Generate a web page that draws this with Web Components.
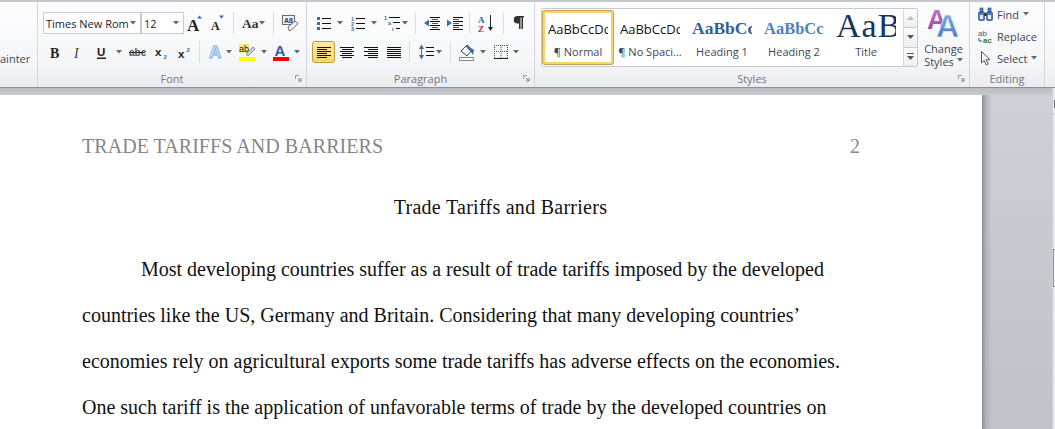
<!DOCTYPE html>
<html>
<head>
<meta charset="utf-8">
<title>Trade Tariffs and Barriers</title>
<style>
  html, body { margin: 0; height: 100%; overflow: hidden; background: #fff; }
</style>
</head>
<body>
<word-app>
  <word-ribbon>
    <ribbon-group w="38" label="">
      <div style="flex:none;height:32px"></div>
      <div style="flex:none;font:11px 'Open Sans',sans-serif;color:#3d4a5c;line-height:16px">ainter</div>
    </ribbon-group>

    <ribbon-group w="269" label="Font" launcher>
      <ribbon-row>
        <font-combo m="5" w="98" arrow>Times New Rom</font-combo>
        <font-combo w="43" arrow>12</font-combo>
        <tool-btn i="grow" m="4"></tool-btn>
        <tool-btn i="shrink" m="9"></tool-btn>
        <tool-btn i="sep" m="9"></tool-btn>
        <tool-btn i="case" m="8"></tool-btn>
        <tool-btn i="caret" m="2"></tool-btn>
        <tool-btn i="sep" m="8"></tool-btn>
        <tool-btn i="clear" m="8"></tool-btn>
      </ribbon-row>
      <ribbon-row>
        <tool-btn i="bold" m="12"></tool-btn>
        <tool-btn i="italic" m="13"></tool-btn>
        <tool-btn i="under" m="15"></tool-btn>
        <tool-btn i="caret" m="10"></tool-btn>
        <tool-btn i="strike" m="7"></tool-btn>
        <tool-btn i="sub" m="10"></tool-btn>
        <tool-btn i="sup" m="11"></tool-btn>
        <tool-btn i="sep" m="9"></tool-btn>
        <tool-btn i="effect" m="8"></tool-btn>
        <tool-btn i="caret" m="2"></tool-btn>
        <tool-btn i="marker" m="7"></tool-btn>
        <tool-btn i="caret" m="6"></tool-btn>
        <tool-btn i="color" m="6"></tool-btn>
        <tool-btn i="caret" m="5"></tool-btn>
      </ribbon-row>
    </ribbon-group>

    <ribbon-group w="228" label="Paragraph" launcher>
      <ribbon-row>
        <tool-btn i="bullets" m="10"></tool-btn>
        <tool-btn i="caret" m="6"></tool-btn>
        <tool-btn i="numbers" m="8"></tool-btn>
        <tool-btn i="caret" m="6"></tool-btn>
        <tool-btn i="multi" m="7"></tool-btn>
        <tool-btn i="caret" m="2"></tool-btn>
        <tool-btn i="sep" m="7"></tool-btn>
        <tool-btn i="outdent" m="8"></tool-btn>
        <tool-btn i="indent" m="7"></tool-btn>
        <tool-btn i="sep" m="6"></tool-btn>
        <tool-btn i="sort" m="8"></tool-btn>
        <tool-btn i="sep" m="10"></tool-btn>
        <tool-btn i="pilcrow" m="10"></tool-btn>
      </ribbon-row>
      <ribbon-row>
        <tool-btn i="left" m="5" on></tool-btn>
        <tool-btn i="center" m="5"></tool-btn>
        <tool-btn i="right" m="10"></tool-btn>
        <tool-btn i="justify" m="9"></tool-btn>
        <tool-btn i="sep" m="8"></tool-btn>
        <tool-btn i="spacing" m="9"></tool-btn>
        <tool-btn i="caret" m="2"></tool-btn>
        <tool-btn i="sep" m="8"></tool-btn>
        <tool-btn i="shade" m="8"></tool-btn>
        <tool-btn i="caret" m="5"></tool-btn>
        <tool-btn i="borders" m="8"></tool-btn>
        <tool-btn i="caret" m="5"></tool-btn>
      </ribbon-row>
    </ribbon-group>

    <ribbon-group w="435" label="Styles" launcher>
      <div style="display:flex;flex:none">
        <style-gallery>
          <style-tile w="72" active sample="AaBbCcDc" name="¶ Normal"></style-tile>
          <style-tile w="68" m="2" sample="AaBbCcDc" name="¶ No Spaci..."></style-tile>
          <style-tile w="68" m="4" kind="h1" sample="AaBbCc" name="Heading 1"></style-tile>
          <style-tile w="68" m="4" kind="h2" sample="AaBbCc" name="Heading 2"></style-tile>
          <style-tile w="68" m="4" kind="title" sample="AaB" name="Title"></style-tile>
        </style-gallery>
        <change-styles></change-styles>
      </div>
    </ribbon-group>

    <ribbon-group w="75" label="Editing">
      <edit-list>
        <edit-item i="find" caret>Find</edit-item>
        <edit-item i="replace">Replace</edit-item>
        <edit-item i="select" caret>Select</edit-item>
      </edit-list>
    </ribbon-group>
  </word-ribbon>

  <doc-area>
    <doc-page>
      <doc-header num="2">TRADE TARIFFS AND BARRIERS</doc-header>
      <doc-title>Trade Tariffs and Barriers</doc-title>
      <doc-line indent>Most developing countries suffer as a result of trade tariffs imposed by the developed</doc-line>
      <doc-line>countries like the US, Germany and Britain. Considering that many developing countries’</doc-line>
      <doc-line>economies rely on agricultural exports some trade tariffs has adverse effects on the economies.</doc-line>
      <doc-line>One such tariff is the application of unfavorable terms of trade by the developed countries on</doc-line>
    </doc-page>
  </doc-area>
</word-app>

<script>
const UI_FONT = "'Open Sans','Noto Sans',sans-serif";
const SERIF = "'Liberation Serif',serif";
const lines = (x, ys, w, c = '#111') => ys.map(y => `<rect x="${x}" y="${y}" width="${w}" height="1" fill="${c}"/>`).join('');

// every icon: width, height, svg body
const ICONS = {
  caret: [6, 4, `<path d="M0 0h6L3 3.4z" fill="#666"/>`],
  sep: [1, 22, `<rect width="1" height="22" fill="#d9dce0"/>`],
  grow: [14, 16, `<text x="-1" y="15.500" font-family="Liberation Serif" font-weight="bold" font-size="17" fill="#222">A</text><path d="M9 3.5l2.5-3 2.5 3z" fill="#3a6bb0"/>`],
  shrink: [13, 16, `<text x="0" y="15" font-family="Liberation Serif" font-weight="bold" font-size="12" fill="#222">A</text><path d="M8 .5h5l-2.500 3z" fill="#3a6bb0"/>`],
  case: [15, 14, `<text x="0" y="12" font-family="Liberation Serif" font-weight="bold" font-size="13.500" fill="#333">Aa</text>`],
  clear: [16, 17, `<rect x=".5" y=".5" width="12" height="9" fill="#eef3fa" stroke="#667"/><text x="2" y="8" font-family="Liberation Sans" font-size="7" font-weight="bold" fill="#334">A8</text><path d="M6 12l7-6 3 2.500-7 7H7z" fill="#eceff4" stroke="#667"/>`],
  bold: [10, 13, `<text x="0" y="12" font-family="Liberation Serif" font-weight="bold" font-size="14" fill="#222">B</text>`],
  italic: [9, 13, `<text x="1" y="12" font-family="Liberation Serif" font-style="italic" font-size="14" fill="#444">I</text>`],
  under: [9, 14, `<text x="0" y="10.500" font-family="Liberation Sans" font-weight="bold" font-size="11.500" fill="#222">U</text><rect y="12.500" width="9" height="1.500" fill="#222"/>`],
  strike: [16, 12, `<text x="0" y="10" font-family="Liberation Sans" font-weight="bold" font-size="10" fill="#555">abc</text><rect y="6" width="16" height="1" fill="#222"/>`],
  sub: [12, 13, `<text x="0" y="10" font-family="Liberation Sans" font-weight="bold" font-size="11.500" fill="#222">x</text><text x="8.500" y="12.500" font-family="Liberation Sans" font-weight="bold" font-size="6" fill="#3a6bb0">2</text>`],
  sup: [12, 13, `<text x="0" y="12" font-family="Liberation Sans" font-weight="bold" font-size="11.500" fill="#222">x</text><text x="8.500" y="6" font-family="Liberation Sans" font-weight="bold" font-size="6" fill="#3a6bb0">2</text>`],
  effect: [16, 16, `<text x="1" y="14" font-family="Liberation Sans" font-weight="bold" font-size="17" fill="#e3effb" stroke="#7db0e3" stroke-width="1">A</text>`],
  marker: [16, 17, `<rect y="0" width="10" height="9" fill="#efe98a"/><text x="0" y="8" font-family="Liberation Sans" font-size="9" fill="#222">ab</text><path d="M7 10l7-7 2 2-7 7z" fill="#c6d3e6" stroke="#667" stroke-width=".7"/><rect y="13" width="16" height="4" fill="#ff0"/>`],
  color: [16, 17, `<text x="1.500" y="12" font-family="Liberation Sans" font-weight="bold" font-size="15" fill="#2f5a9e">A</text><rect y="13" width="16" height="4" fill="#f00"/>`],
  bullets: [14, 14, `<g fill="#3a6bb0"><rect x="0" y="1" width="3" height="3"/><rect x="0" y="6" width="3" height="3"/><rect x="0" y="11" width="3" height="3"/></g>` + lines(5, [2, 7, 12], 9)],
  numbers: [14, 14, `<g font-family="Liberation Sans" font-weight="bold" font-size="5.500" fill="#3a6bb0"><text y="5">1</text><text y="10">2</text><text y="15">3</text></g>` + lines(5, [2, 7, 12], 9)],
  multi: [16, 16, `<g font-family="Liberation Sans" font-weight="bold" font-size="5.500" fill="#3a6bb0"><text y="5">1</text><text x="4" y="10">a</text><text x="8" y="15.500">i</text></g>` + lines(5, [2], 11) + lines(9, [7], 7) + lines(12, [13], 4)],
  outdent: [16, 15, lines(6, [1, 5, 9, 13], 10) + lines(8, [3, 7, 11], 6, '#555') + `<path d="M0 7l5-3.500v7z" fill="#3a6bb0"/>`],
  indent: [16, 15, lines(6, [1, 5, 9, 13], 10) + lines(6, [3, 7, 11], 6, '#555') + `<path d="M5 7L0 3.500v7z" fill="#3a6bb0"/>`],
  sort: [15, 17, `<text x="0" y="8" font-family="Liberation Serif" font-weight="bold" font-size="9" fill="#2f5a9e">A</text><text x="0" y="16.500" font-family="Liberation Serif" font-weight="bold" font-size="9" fill="#a33">Z</text><rect x="12" y="0" width="1" height="13" fill="#222"/><path d="M10 12h5l-2.500 4z" fill="#222"/>`],
  pilcrow: [10, 14, `<path d="M3.500 0H10v1.500H9V13H7.500V1.500h-1V13H5V7.500H3.500a3.700 3.700 0 0 1 0-7.500z" fill="#333"/>`],
  left: [14, 11, lines(0, [0, 4, 8], 14) + lines(0, [2, 6, 10], 10)],
  center: [14, 11, lines(0, [0, 4, 8], 14) + lines(2, [2, 6, 10], 10)],
  right: [14, 11, lines(0, [0, 4, 8], 14) + lines(4, [2, 6, 10], 10)],
  justify: [14, 11, lines(0, [0, 2, 4, 6, 8, 10], 14)],
  spacing: [15, 16, `<rect x="2" y="3" width="1" height="10" fill="#3a6bb0"/><path d="M0 5l2.500-4.500L5 5zM0 11l2.500 4.500L5 11z" fill="#3a6bb0"/>` + lines(7, [3, 7, 11], 8)],
  shade: [16, 17, `<path d="M2 7l6-6 5 5-5 6z" fill="#f6f8fc" stroke="#445"/><path d="M7 3l2-2 3 3 3 2-1 5-2-3-2-2z" fill="#3a6bb0"/><rect x=".5" y="13.500" width="14" height="3" fill="#fff" stroke="#888"/>`],
  borders: [14, 14, `<path d="M.5 0v13M7 0v13M13.500 0v13M0 .5h14M0 6.500h14" fill="none" stroke="#555" stroke-width="1" stroke-dasharray="1 1"/><rect y="13" width="14" height="1" fill="#222"/>`],
  find: [15, 14, `<g fill="#4f7cc0" stroke="#1f3f75" stroke-width=".6"><rect x=".5" y="5" width="6" height="8.500" rx="1"/><rect x="8.500" y="5" width="6" height="8.500" rx="1"/><rect x="2" y="1" width="3" height="4"/><rect x="10" y="1" width="3" height="4"/></g><rect x="2" y="8" width="3" height="4" fill="#e8f0fb"/><rect x="10" y="8" width="3" height="4" fill="#e8f0fb"/><rect x="6.500" y="6" width="2" height="3" fill="#223"/>`],
  replace: [15, 15, `<text x="0" y="6.500" font-family="Liberation Sans" font-size="8" fill="#555">ab</text><text x="5" y="14" font-family="Liberation Sans" font-weight="bold" font-size="8" fill="#2e7d32">ac</text><path d="M1 9v3h3" fill="none" stroke="#2f5a9e"/>`],
  select: [10, 15, `<path d="M.500.500v11.500l2.700-2.500 2 4.500 2-1-2-4.300h3.800z" fill="#f5f7fb" stroke="#556"/>`],
};

const svgIcon = name => {
  const [w, h, body] = ICONS[name];
  return `<svg width="${w}" height="${h}" viewBox="0 0 ${w} ${h}" style="display:block;overflow:visible">${body}</svg>`;
};

class WordApp extends HTMLElement {
  constructor() {
    super();
    this.attachShadow({mode: 'open'}).innerHTML = `
    <style>
    :host { display: flex; flex-direction: column; width: 1055px; height: 429px; overflow: hidden; }
    </style>
    <slot></slot>`;
  }
}

class WordRibbon extends HTMLElement {
  constructor() {
    super();
    this.attachShadow({mode: 'open'}).innerHTML = `
    <style>
    :host {
      display: flex; flex: none; height: 85px; box-sizing: content-box;
      border-top: 2px solid #c4c7cb; border-bottom: 1px solid #8c9095;
      background: linear-gradient(#fdfdfe, #f5f6f8 70%, #eaecf0);
    }
    </style>
    <slot></slot>`;
  }
}

class RibbonGroup extends HTMLElement {
  constructor() {
    super();
    const launcher = this.hasAttribute('launcher')
      ? `<svg class="launch" width="7" height="7" viewBox="0 0 7 7"><path d="M0 .5h4M.5 0v4" stroke="#9a9ea4"/><path d="M3 3l3 3M6 3v3H3" stroke="#7d8188" fill="none"/></svg>` : '';
    this.attachShadow({mode: 'open'}).innerHTML = `
    <style>
    :host {
      display: flex; flex-direction: column; flex: none; box-sizing: border-box;
      width: ${this.getAttribute('w')}px; height: 85px;
      border-right: 1px solid #d3d6da; overflow: hidden;
    }
    .body { flex: 1; display: flex; flex-direction: column; gap: 7px; padding-top: 10px; min-height: 0; }
    .foot {
      flex: none; height: 15px; display: grid; grid-template-columns: 1fr auto 1fr; align-items: center;
      font: 11px ${UI_FONT}; color: #737880; margin-bottom: 1px;
    }
    .launch { grid-column: 3; justify-self: end; margin-right: 4px; }
    .name { grid-column: 2; }
    </style>
    <div class="body"><slot></slot></div>
    <div class="foot"><span class="name">${this.getAttribute('label') || ''}</span>${launcher}</div>`;
  }
}

class RibbonRow extends HTMLElement {
  constructor() {
    super();
    this.attachShadow({mode: 'open'}).innerHTML = `
    <style>:host { display: flex; flex: none; align-items: center; height: 22px; }</style>
    <slot></slot>`;
  }
}

class ToolBtn extends HTMLElement {
  constructor() {
    super();
    const on = this.hasAttribute('on');
    this.attachShadow({mode: 'open'}).innerHTML = `
    <style>
    :host {
      display: flex; flex: none; align-items: center; justify-content: center;
      margin-left: ${this.getAttribute('m') || 0}px;
      ${on ? 'width: 23px; height: 22px; box-sizing: border-box; border: 1px solid #c29b45; border-radius: 3px; background: linear-gradient(#fde9a4, #fbd66c);' : ''}
    }
    </style>
    ${svgIcon(this.getAttribute('i'))}`;
  }
}

class FontCombo extends HTMLElement {
  constructor() {
    super();
    this.attachShadow({mode: 'open'}).innerHTML = `
    <style>
    :host {
      display: flex; flex: none; align-items: center; box-sizing: border-box;
      width: ${this.getAttribute('w')}px; height: 22px; margin-left: ${this.getAttribute('m') || 0}px;
      border: 1px solid #c7cad0; background: #fff; padding: 0 4px 0 2px;
      font: 11px ${UI_FONT}; color: #1a1a2e; white-space: nowrap; overflow: hidden;
    }
    .t { flex: 1; overflow: hidden; }
    </style>
    <span class="t"><slot></slot></span>${svgIcon('caret')}`;
  }
}

class StyleGallery extends HTMLElement {
  constructor() {
    super();
    const arrow = (up, bar) => `<div class="sb"><svg width="7" height="${bar ? 7 : 4}" viewBox="0 0 7 ${bar ? 7 : 4}">
      ${bar ? '<rect width="7" height="1" fill="#555"/>' : ''}
      <path d="${up ? 'M0 4h7L3.500 0z' : `M0 ${bar ? 3 : 0}h7l-3.500 4z`}" fill="${up ? '#b9bcc1' : '#555'}"/></svg></div>`;
    this.attachShadow({mode: 'open'}).innerHTML = `
    <style>
    :host {
      display: flex; flex: none; box-sizing: border-box; width: 377px; height: 59px;
      margin: -4px 0 0 6px; border: 1px solid #c6c9ce; border-radius: 2px; background: #fff;
    }
    .items { flex: 1; display: flex; padding-top: 1px; box-sizing: border-box; }
    .scroll { flex: none; width: 13px; display: flex; flex-direction: column; border-left: 1px solid #d5d8dc; }
    .sb { flex: 1; display: flex; align-items: center; justify-content: center; background: linear-gradient(#fdfdfe, #eceef1); }
    .sb + .sb { border-top: 1px solid #c6c9ce; }
    </style>
    <div class="items"><slot></slot></div>
    <div class="scroll">${arrow(true)}${arrow(false)}${arrow(false, true)}</div>`;
  }
}

class StyleTile extends HTMLElement {
  constructor() {
    super();
    const kind = this.getAttribute('kind') || 'body';
    const samples = {
      body: `font: 13px ${UI_FONT}; color: #111;`,
      h1: `font: bold 17.5px ${SERIF}; color: #365f91;`,
      h2: `font: bold 16.5px ${SERIF}; color: #4f81bd;`,
      title: `font: 34px ${SERIF}; color: #17365d; letter-spacing: 1px; padding-bottom: 6px;`,
    };
    const active = this.hasAttribute('active');
    this.attachShadow({mode: 'open'}).innerHTML = `
    <style>
    :host {
      display: flex; flex: none; flex-direction: column; align-items: center; box-sizing: border-box;
      width: ${this.getAttribute('w')}px; height: 55px; margin-left: ${this.getAttribute('m') || 0}px;
      ${active ? 'border: 3px solid #fbd36d; outline: 1px solid #c6a356; outline-offset: -1px; border-radius: 3px;' : 'padding: 3px;'}
    }
    .s { box-sizing: border-box; height: 31px; width: 60px; display: flex; align-items: center; justify-content: flex-start; overflow: hidden; white-space: nowrap; ${samples[kind]} }
    .n { font: 11px ${UI_FONT}; color: #3f4652; line-height: 15px; white-space: nowrap; }
    </style>
    <div class="s">${this.getAttribute('sample')}</div>
    <div class="n">${this.getAttribute('name')}</div>`;
  }
}

class ChangeStyles extends HTMLElement {
  constructor() {
    super();
    this.attachShadow({mode: 'open'}).innerHTML = `
    <style>
    :host {
      display: flex; flex-direction: column; align-items: center; width: 52px; margin-top: -4px;
      font: 11px ${UI_FONT}; color: #3f4652; line-height: 13px;
    }
    svg { display: block; margin-bottom: 4px; overflow: visible; }
    .c { display: flex; align-items: center; gap: 3px; }
    </style>
    <svg width="34" height="30" viewBox="0 0 34 30">
      <defs>
        <linearGradient id="pu" x1="0" y1="0" x2="0" y2="1"><stop offset="0" stop-color="#c77fce"/><stop offset="1" stop-color="#8a3f9d"/></linearGradient>
        <linearGradient id="bl" x1="0" y1="0" x2="0" y2="1"><stop offset="0" stop-color="#8fb6ea"/><stop offset="1" stop-color="#3d6fc0"/></linearGradient>
      </defs>
      <text x="0" y="21" font-family="Liberation Sans" font-weight="bold" font-size="27" fill="url(#pu)">A</text>
      <text x="9" y="29" font-family="Liberation Sans" font-weight="bold" font-size="32" fill="url(#bl)" stroke="#fff" stroke-width=".5">A</text>
    </svg>
    <div>Change</div>
    <div class="c">Styles ${svgIcon('caret')}</div>`;
  }
}

class EditList extends HTMLElement {
  constructor() {
    super();
    this.attachShadow({mode: 'open'}).innerHTML = `
    <style>:host { display: flex; flex: none; flex-direction: column; margin: -9px 0 0 8px; }</style>
    <slot></slot>`;
  }
}

class EditItem extends HTMLElement {
  constructor() {
    super();
    this.attachShadow({mode: 'open'}).innerHTML = `
    <style>
    :host {
      display: flex; align-items: center; height: 22px;
      font: 11px ${UI_FONT}; color: #3f4652;
    }
    .ic { width: 15px; display: flex; justify-content: center; margin-right: 4px; }
    .ca { margin-left: 4px; }
    </style>
    <span class="ic">${svgIcon(this.getAttribute('i'))}</span><slot></slot>
    ${this.hasAttribute('caret') ? `<span class="ca">${svgIcon('caret')}</span>` : ''}`;
  }
}

class DocArea extends HTMLElement {
  constructor() {
    super();
    this.attachShadow({mode: 'open'}).innerHTML = `
    <style>
    :host { display: flex; flex: 1; min-height: 0; background: #c7cacf; }
    .main { flex: 1; display: flex; flex-direction: column; min-width: 0; }
    .band { flex: none; height: 7px; background: linear-gradient(#b9bdc1, #c6c9cd); }
    .view {
      flex: 1; min-height: 0; display: flex; overflow: hidden;
      background: linear-gradient(#cdd0d5, #bfc2c6);
    }
    .shadow { flex: none; width: 10px; background: linear-gradient(90deg, #8e9195, #b0b3b7 40%, rgba(200,203,208,0)); }
    .bar { flex: none; width: 3px; background: #e6e8eb; box-sizing: border-box; padding-top: 12px; border-left: 1px solid #cfd2d6; }
    .mark { height: 8px; width: 1px; margin-left: 1px; background: #6f7377; }
    .tick { height: 1px; margin-top: 6px; background: #c2c5c9; }
    .thumb { height: 38px; margin-top: 134px; background: #f6f7f9; border: 1px solid #8e9299; border-right: 0; box-sizing: border-box; }
    </style>
    <div class="main">
      <div class="band"></div>
      <div class="view"><slot></slot><div class="shadow"></div></div>
    </div>
    <div class="bar"><div class="mark"></div><div class="tick"></div><div class="thumb"></div></div>`;
  }
}

class DocPage extends HTMLElement {
  constructor() {
    super();
    this.attachShadow({mode: 'open'}).innerHTML = `
    <style>
    :host {
      display: flex; flex-direction: column; flex: none; box-sizing: border-box;
      width: 982px; padding: 40px 122px 0 82px; background: #fff;
      font: 20px ${SERIF}; color: #111;
    }
    </style>
    <slot></slot>`;
  }
}

class DocHeader extends HTMLElement {
  constructor() {
    super();
    this.attachShadow({mode: 'open'}).innerHTML = `
    <style>
    :host {
      display: flex; justify-content: space-between; height: 23px; line-height: 23px;
      color: #868686; white-space: nowrap; letter-spacing: .05px;
    }
    </style>
    <span><slot></slot></span><span>${this.getAttribute('num')}</span>`;
  }
}

class DocTitle extends HTMLElement {
  constructor() {
    super();
    this.attachShadow({mode: 'open'}).innerHTML = `
    <style>
    :host {
      display: block; text-align: center; margin-top: 38px; padding-left: 59px;
      height: 23px; line-height: 23px; white-space: nowrap; letter-spacing: .27px;
    }
    </style>
    <slot></slot>`;
  }
}

class DocLine extends HTMLElement {
  constructor() {
    super();
    this.attachShadow({mode: 'open'}).innerHTML = `
    <style>
    :host {
      display: block; height: 46px; line-height: 46px; white-space: nowrap;
      ${this.hasAttribute('indent') ? 'padding-left: 59px; margin-top: 27px;' : ''}
    }
    </style>
    <slot></slot>`;
  }
}

customElements.define('word-app', WordApp);
customElements.define('word-ribbon', WordRibbon);
customElements.define('ribbon-group', RibbonGroup);
customElements.define('ribbon-row', RibbonRow);
customElements.define('tool-btn', ToolBtn);
customElements.define('font-combo', FontCombo);
customElements.define('style-gallery', StyleGallery);
customElements.define('style-tile', StyleTile);
customElements.define('change-styles', ChangeStyles);
customElements.define('edit-list', EditList);
customElements.define('edit-item', EditItem);
customElements.define('doc-area', DocArea);
customElements.define('doc-page', DocPage);
customElements.define('doc-header', DocHeader);
customElements.define('doc-title', DocTitle);
customElements.define('doc-line', DocLine);
</script>
</body>
</html>
